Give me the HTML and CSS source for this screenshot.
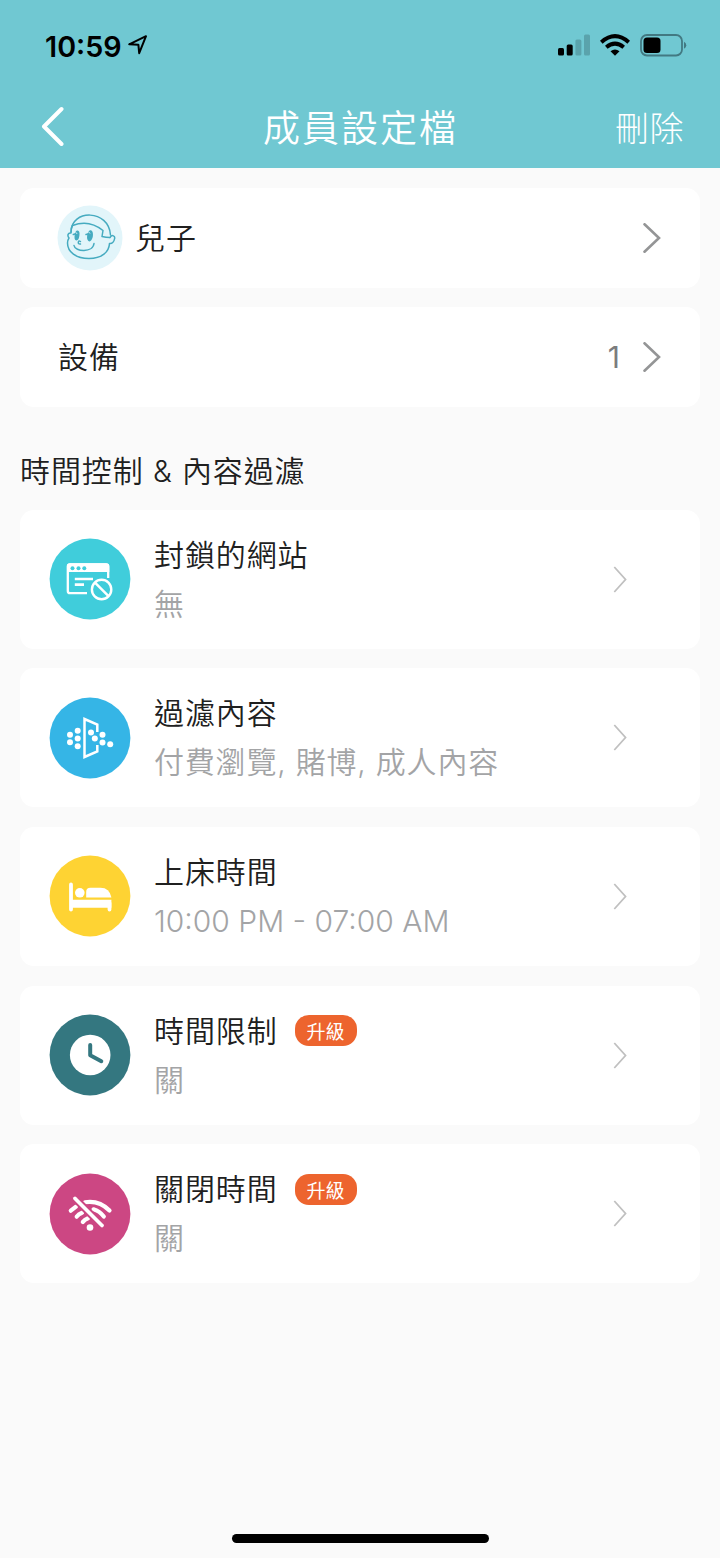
FILE: index.html
```html
<!DOCTYPE html>
<html lang="zh-Hant">
<head>
<meta charset="utf-8">
<title>成員設定檔</title>
<link rel="stylesheet" href="styles.css">
</head>
<body>
<div class="screen">
  <header class="top">
    <div class="status">
      <div class="status-left">
        <span class="clock">10:59</span>
        <svg class="location" width="20" height="20" viewBox="0 0 20 20"><path d="M1.2 9.3 18 1.2 11.2 18.2 10.4 9.8Z" fill="none" stroke="#000" stroke-width="2" stroke-linejoin="round"/></svg>
      </div>
      <div class="status-right">
        <svg width="32" height="22" viewBox="0 0 32 22"><rect x="0" y="14" width="6" height="7.500" rx="1.500"/><rect x="8.700" y="10.500" width="6" height="11" rx="1.500"/><g fill="#5aa3ac"><rect x="17.400" y="5.500" width="6" height="16" rx="1.500"/><rect x="26" y="0.500" width="6" height="21" rx="1.500"/></g></svg>
        <svg width="30" height="22" viewBox="0 0 30 22"><g fill="none" stroke="#000" stroke-width="4"><path d="M1.300 8.200Q15-3.900 28.700 8.200"/><path d="M6.300 13.300Q15 6 23.700 13.300"/></g><path d="M10.500 17.300Q15 13.800 19.500 17.300L15 21.800Z"/></svg>
        <svg width="47" height="24" viewBox="0 0 47 24"><rect x="1" y="1" width="41" height="20.500" rx="6" fill="none" stroke="#427982" stroke-width="1.800"/><rect x="3.500" y="3.500" width="17" height="15.500" rx="3.500"/><path d="M44 7.800Q46.300 9 46.300 11.200T44 14.700Z" fill="#427982"/></svg>
      </div>
    </div>
    <nav class="nav">
      <svg class="back" width="24" height="40" viewBox="0 0 24 40"><path d="M20.500 3 3 20.500 20.500 38" fill="none" stroke="#fff" stroke-width="4" stroke-linecap="round" stroke-linejoin="round"/></svg>
      <h1 class="title">成員設定檔</h1>
      <span class="delete">刪除</span>
    </nav>
  </header>

  <main class="content">
    <div class="card row">
      <svg class="avatar" width="66" height="66" viewBox="0 0 66 66"><circle cx="33" cy="33" r="32.500" fill="#e2f5fa"/><g fill="none" stroke="#46abc0" stroke-width="1.500" stroke-linecap="round" stroke-linejoin="round"><path d="M14 27C14 4 52 4 53.500 30"/><path d="M15.500 20.500Q32 14 46 25.500L45 31.500Q49 32.500 53 32.500"/><path d="M53 32.500C55 29 58.500 31 57.500 34 57 37 55 39 52.500 38.500 52 47 45 53.500 32 53.500 19 53.500 10.500 47 10.500 38 10.500 36 11 34.500 12 33 10 30.500 11 27.500 14 28Q14 23 15.500 20.500"/><path d="M17 40.500C18 47 36 48 37 38.500"/><path d="M16.300 29.500 18 29M29 29.500 31 29M23.500 36.500Q21.500 35 21.300 37.200T23.500 39"/></g><g fill="#46abc0"><ellipse cx="20" cy="30.500" rx="2.400" ry="5" transform="rotate(8 20 30.500)"/><ellipse cx="33" cy="30.800" rx="2.900" ry="5.700" transform="rotate(8 33 30.800)"/></g><path d="M18.800 27.300 20 28.800M31.300 26.600 33 28.500" stroke="#e2f5fa" stroke-width="1"/></svg>
      <span class="label name">兒子</span>
      <svg class="go" width="18" height="30" viewBox="0 0 18 30"><path d="M1.500 1.300 16 15 1.500 28.700"/></svg>
    </div>
    <div class="card row">
      <span class="label">設備</span>
      <span class="count">1</span>
      <svg class="go" width="18" height="30" viewBox="0 0 18 30"><path d="M1.500 1.300 16 15 1.500 28.700"/></svg>
    </div>

    <h2 class="section">時間控制 &amp; 內容過濾</h2>

    <div class="list">
      <div class="card item">
        <svg class="icon" width="82" height="82" viewBox="0 0 82 82"><circle cx="41" cy="41" r="40.400" fill="#40cddb"/><path d="M59.200 40V28.500Q59.200 26.300 57 26.300H21Q18.800 26.300 18.800 28.500V53Q18.800 55.200 21 55.200H38" fill="none" stroke="#fff" stroke-width="2.300"/><path d="M18 34V28Q18 25.200 21 25.200H57Q60.300 25.200 60.300 28V34Z" fill="#fff"/><g fill="#40cddb"><circle cx="23.500" cy="30.300" r="2"/><circle cx="29.500" cy="30.300" r="2"/><circle cx="35.300" cy="30.300" r="2"/></g><path d="M25.800 41H44M25.800 46.700H35" stroke="#fff" stroke-width="2.700" fill="none"/><circle cx="52.600" cy="51.500" r="12" fill="#40cddb"/><circle cx="52.600" cy="51.500" r="9.700" fill="none" stroke="#fff" stroke-width="2.400"/><path d="m46 44.700 13.500 13.500" stroke="#fff" stroke-width="2.400"/></svg>
        <div class="text"><div class="head"><span class="label">封鎖的網站</span></div><span class="sub">無</span></div>
        <svg class="more" width="14" height="27" viewBox="0 0 14 27"><path d="M1.300 1 12.500 13.500 1.300 26"/></svg>
      </div>
      <div class="card item">
        <svg class="icon" width="82" height="82" viewBox="0 0 82 82"><circle cx="41" cy="41" r="40.400" fill="#35b5e6"/><path d="M48.300 35V27.500L35.500 22V60L48.300 54.500V48" fill="none" stroke="#fff" stroke-width="2.500"/><g fill="#fff"><circle cx="21" cy="37.700" r="3"/><circle cx="21" cy="45.300" r="3"/><circle cx="28.700" cy="33.800" r="3"/><circle cx="28.700" cy="41.600" r="3"/><circle cx="28.700" cy="49.300" r="3"/><circle cx="42" cy="35.600" r="3"/><circle cx="45.800" cy="41.600" r="3"/><circle cx="53.500" cy="37.700" r="3"/><circle cx="53.500" cy="45.500" r="3"/><circle cx="61.200" cy="47.200" r="3"/></g></svg>
        <div class="text"><div class="head"><span class="label">過濾內容</span></div><span class="sub">付費瀏覽, 賭博, 成人內容</span></div>
        <svg class="more" width="14" height="27" viewBox="0 0 14 27"><path d="M1.300 1 12.500 13.500 1.300 26"/></svg>
      </div>
      <div class="card item">
        <svg class="icon" width="82" height="82" viewBox="0 0 82 82"><circle cx="41" cy="41" r="40.400" fill="#fed333"/><path d="M22 29.500V54.500M60.500 48V54.500" stroke="#fff" stroke-width="3.800" stroke-linecap="round"/><path d="M21 44.800H62.400V52.700H21Z" fill="#fff"/><circle cx="30.800" cy="37.800" r="4.800" fill="#fff"/><path d="M37.200 42.500V37Q37.200 32.800 41.400 32.800H51.500Q60.500 32.800 62.400 42.500Z" fill="#fff"/></svg>
        <div class="text"><div class="head"><span class="label">上床時間</span></div><span class="sub latin">10:00 PM - 07:00 AM</span></div>
        <svg class="more" width="14" height="27" viewBox="0 0 14 27"><path d="M1.300 1 12.500 13.500 1.300 26"/></svg>
      </div>
      <div class="card item">
        <svg class="icon" width="82" height="82" viewBox="0 0 82 82"><circle cx="41" cy="41" r="40.400" fill="#347780"/><circle cx="41.200" cy="41" r="20.300" fill="#fff"/><path d="M41.200 31V41.300L52.300 47.200" fill="none" stroke="#347780" stroke-width="4" stroke-linecap="round" stroke-linejoin="round"/></svg>
        <div class="text"><div class="head"><span class="label">時間限制</span><span class="badge">升級</span></div><span class="sub">關</span></div>
        <svg class="more" width="14" height="27" viewBox="0 0 14 27"><path d="M1.300 1 12.500 13.500 1.300 26"/></svg>
      </div>
      <div class="card item">
        <svg class="icon" width="82" height="82" viewBox="0 0 82 82"><circle cx="41" cy="41" r="40.400" fill="#cc4783"/><g fill="none" stroke="#fff" stroke-width="4.200" stroke-linecap="round"><path d="M36 29.300Q50 27 60.500 37.500"/><path d="M44.500 36.300Q50.500 38 54.800 43.500"/><path d="M21.800 37.700 27 33.600"/><path d="M27.700 43.700Q29.500 41 33 39.700"/><path d="M33.800 49Q35.500 46.500 39 45.200"/></g><path d="M26 25.500 53 52.500" stroke="#cc4783" stroke-width="7.500"/><path d="M26 25.500 53 52.500" stroke="#fff" stroke-width="3.800" stroke-linecap="round"/><circle cx="41" cy="54.500" r="3.300" fill="#fff"/></svg>
        <div class="text"><div class="head"><span class="label">關閉時間</span><span class="badge">升級</span></div><span class="sub">關</span></div>
        <svg class="more" width="14" height="27" viewBox="0 0 14 27"><path d="M1.300 1 12.500 13.500 1.300 26"/></svg>
      </div>
    </div>
  </main>
  <div class="home-bar"></div>
</div>
</body>
</html>
```
FILE: styles.css
```css
* { box-sizing: border-box; }
body {
  margin: 0;
  background: #fafafa;
  font-family: Inter, "Noto Sans CJK TC", sans-serif;
  color: #202020;
}
svg { display: block; flex: none; }
.screen {
  display: flex;
  flex-direction: column;
  width: 720px;
  height: 1558px;
  overflow: hidden;
}
.top { flex: none; height: 168px; background: #70c8d2; }
.status {
  display: flex;
  justify-content: space-between;
  height: 84px;
  padding: 34px 33px 0 45px;
}
.status-left, .status-right { display: flex; }
.status-left { gap: 6px; }
.clock {
  width: 77px;
  font-size: 28.700px;
  font-weight: 600;
  line-height: 25px;
  color: #000;
  white-space: nowrap;
}
.location { margin-top: 1px; }
.status-right { gap: 10px; }
.nav {
  display: grid;
  grid-template-columns: 100px 1fr 100px;
  align-items: center;
  height: 84px;
  padding: 0 36px 0 41px;
}
.title {
  margin: 0;
  padding-top: 5px;
  padding-right: 4px;
  text-align: center;
  font-size: 37px;
  font-weight: 350;
  letter-spacing: 2px;
  line-height: 50px;
  color: #fff;
}
.delete {
  justify-self: end;
  padding-top: 5px;
  font-size: 34px;
  font-weight: 300;
  line-height: 50px;
  letter-spacing: .5px;
  white-space: nowrap;
  color: #fff;
}
.content { flex: 1; padding: 20px 20px 0; }
.card { background: #fff; border-radius: 14px; }
.row {
  display: flex;
  align-items: center;
  height: 99.500px;
  margin-bottom: 19.500px;
  padding: 0 39px 0 38px;
}
.label {
  font-size: 30px;
  font-weight: 350;
  line-height: 42px;
  letter-spacing: .9px;
  white-space: nowrap;
}
.avatar { margin-left: -1px; }
.name { margin-left: 12px; }
.go { margin-left: auto; fill: none; stroke: #949596; stroke-width: 2.600; stroke-linecap: round; }
.count { margin-left: auto; font-size: 30px; line-height: 40px; color: #7b7c7e; }
.count + .go { margin-left: 23px; }
.section {
  margin: 44px 0 18px;
  font-size: 30px;
  font-weight: 350;
  line-height: 41px;
  letter-spacing: .9px;
  white-space: nowrap;
}
.list { display: flex; flex-direction: column; gap: 19.700px; }
.item {
  display: flex;
  align-items: center;
  height: 139px;
  padding: 0 73px 0 29px;
}
.text { flex: 1; margin-left: 23px; }
.head { display: flex; align-items: center; height: 40px; }
.sub {
  display: block;
  margin-top: 9px;
  font-size: 30px;
  font-weight: 350;
  line-height: 40px;
  letter-spacing: .8px;
  white-space: nowrap;
  color: #a3a4a6;
}
.latin { letter-spacing: 0; }
.badge {
  width: 62px;
  height: 31px;
  margin-left: 17px;
  padding-top: 3px;
  border-radius: 14px;
  background: #ed642e;
  color: #fff;
  font-size: 19px;
  line-height: 30px;
  text-align: center;
}
.more { fill: none; stroke: #c0c0c0; stroke-width: 1.800; }
.home-bar {
  flex: none;
  align-self: center;
  width: 257px;
  height: 9px;
  margin-bottom: 15px;
  border-radius: 5px;
  background: #000;
}
```
